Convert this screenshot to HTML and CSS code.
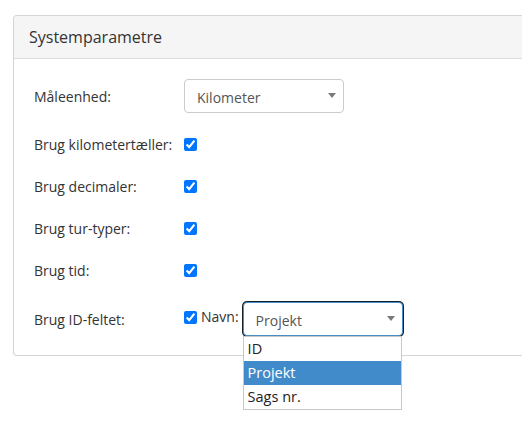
FILE: index.html
```html
<!DOCTYPE html>
<html lang="da">
<head>
<meta charset="utf-8">
<title>Systemparametre</title>
<link rel="stylesheet" href="styles.css">
</head>
<body>
<div class="panel">
  <div class="panel-heading">Systemparametre</div>
  <div class="panel-body">
    <div class="row row-select">
      <span class="label">Måleenhed:</span>
      <div class="select">
        <span class="select-value">Kilometer</span>
        <span class="caret"></span>
      </div>
    </div>
    <div class="row row-check">
      <span class="label">Brug kilometertæller:</span>
      <input type="checkbox" class="check" checked>
    </div>
    <div class="row row-check">
      <span class="label">Brug decimaler:</span>
      <input type="checkbox" class="check" checked>
    </div>
    <div class="row row-check">
      <span class="label">Brug tur-typer:</span>
      <input type="checkbox" class="check" checked>
    </div>
    <div class="row row-check">
      <span class="label">Brug tid:</span>
      <input type="checkbox" class="check" checked>
    </div>
    <div class="row row-id">
      <span class="label">Brug ID-feltet:</span>
      <div class="id-controls">
        <input type="checkbox" class="check" checked>
        <span class="navn">Navn:</span>
        <div class="select select-focus">
          <span class="select-value">Projekt</span>
          <span class="caret"></span>
          <ul class="dropdown">
            <li class="option">ID</li>
            <li class="option option-active">Projekt</li>
            <li class="option">Sags nr.</li>
          </ul>
        </div>
      </div>
    </div>
  </div>
</div>
</body>
</html>
```

FILE: styles.css
```css
html, body {
  margin: 0;
  padding: 0;
  background: #fff;
}

body {
  min-height: 100vh;
  font-family: "Open Sans", "Liberation Sans", sans-serif;
  font-size: 14px;
  color: #333;
}

.panel {
  margin: 15px 0 0 13px;
  border: 1px solid #d4d4d4;
  border-right: 0;
  border-radius: 4px 0 0 4px;
  background: #fff;
}

.panel-heading {
  height: 43px;
  box-sizing: border-box;
  padding: 0 15px;
  display: flex;
  align-items: center;
  background: #f5f5f5;
  border-bottom: 1px solid #dddddd;
  border-radius: 4px 0 0 0;
  font-size: 16px;
  color: #333;
}

.panel-body {
  padding: 20px 20px 19px 20px;
  display: flex;
  flex-direction: column;
}

.row {
  display: flex;
  align-items: center;
}

.label {
  width: 150px;
  flex: none;
  color: #333;
}

.row-select {
  height: 34px;
  margin-bottom: 15px;
}

.row-check {
  height: 32px;
  margin-bottom: 10px;
}

.row-check + .row-id {
  margin-top: 6px;
}

.row-id {
  height: 34px;
}

.check {
  margin: 0;
  width: 13px;
  height: 13px;
  flex: none;
}

.select {
  position: relative;
  width: 160px;
  height: 34px;
  box-sizing: border-box;
  border: 1px solid #cccccc;
  border-radius: 4px;
  padding: 0 12px;
  display: flex;
  align-items: center;
  color: #555;
  background: #fff;
}

.select-value {
  flex: 1;
  padding-top: 3px;
}

.caret {
  width: 0;
  height: 0;
  border-left: 4.5px solid transparent;
  border-right: 4.5px solid transparent;
  border-top: 5px solid #7a7a7a;
  margin-right: -5px;
  margin-top: -2px;
}

.id-controls {
  display: flex;
  align-items: center;
}

.id-controls .check {
  margin-top: -4px;
}

.navn {
  margin-left: 4px;
  margin-right: 4px;
  margin-top: -6px;
}

.select-focus {
  border: 1px solid #4a8cc6;
  box-shadow: 0 0 0 1px #14202c;
  padding-left: 12px;
}

.dropdown {
  position: absolute;
  left: -1px;
  top: 33px;
  width: 159px;
  margin: 0;
  padding: 0;
  list-style: none;
  box-sizing: border-box;
  border: 1px solid #c8c8c8;
  background: #fff;
  z-index: 2;
}

.option {
  height: 24px;
  line-height: 24px;
  padding-left: 4px;
  font-size: 14.5px;
  color: #222;
}

.option-active {
  background: #428bca;
  color: #fff;
}
```
